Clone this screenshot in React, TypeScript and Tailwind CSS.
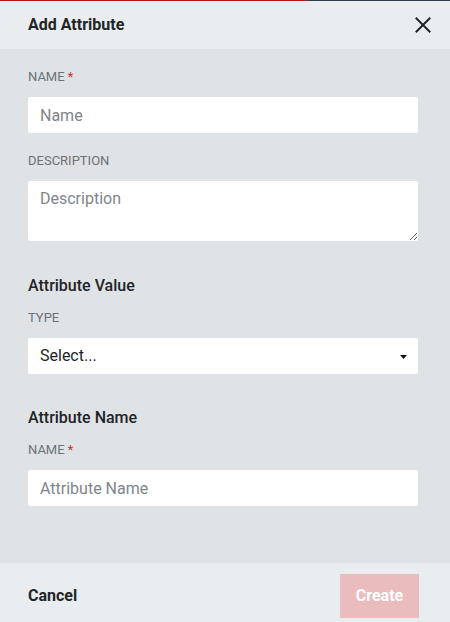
import React from "react";

export default function App() {
  const font = { fontFamily: "Roboto, 'Liberation Sans', sans-serif" };
  return (
    <div className="h-[622px] w-[450px] overflow-hidden flex flex-col bg-[#dfe3e6]" style={font}>
      <div className="flex h-px shrink-0">
        <div className="w-[307px] bg-[#b0191d]" />
        <div className="flex-1 bg-[#2e3d45]" />
      </div>
      <div className="h-[48px] shrink-0 bg-[#e9edf0] flex items-center justify-between pl-[28px] pr-[15px]">
        <div className="text-[16px] font-bold text-[#222426] leading-6">Add Attribute</div>
        <svg width="24" height="24" viewBox="0 0 24 24" fill="none" stroke="#222426" strokeWidth="2" strokeLinecap="square">
          <path d="M5.5 5.5 L18.5 18.5 M18.5 5.5 L5.5 18.5" />
        </svg>
      </div>
      <div className="pl-[28px] pt-[20px] pb-[57px] flex flex-col shrink-0">
        <label className="text-[13px] leading-4 text-[#6c7176] uppercase">
          NAME <span className="text-[#d0312d]">*</span>
        </label>
        <input
          className="mt-[12px] w-[390px] h-[36px] bg-white rounded-[2px] px-3 text-[16px] text-[#222] placeholder:text-[#7f858a] outline-none"
          placeholder="Name"
        />
        <label className="mt-[20px] text-[13px] leading-4 text-[#6c7176]">DESCRIPTION</label>
        <textarea
          className="mt-[12px] w-[390px] h-[60px] bg-white rounded-[2px] px-3 py-[6px] text-[16px] leading-6 text-[#222] placeholder:text-[#7f858a] outline-none resize-y"
          placeholder="Description"
        />
        <div className="mt-[33px] text-[16px] leading-6 font-medium text-[#222426]">Attribute Value</div>
        <label className="mt-[12px] text-[13px] leading-4 text-[#6c7176]">TYPE</label>
        <div className="mt-[12px] w-[390px] h-[36px] bg-white rounded-[2px] pl-3 pr-[8px] flex items-center justify-between">
          <span className="text-[16px] text-[#222426]">Select...</span>
          <svg width="7" height="4" viewBox="0 0 7 4" className="mr-[3px] mt-[1px]">
            <path d="M0 0 H7 L3.5 4 Z" fill="#111" />
          </svg>
        </div>
        <div className="mt-[32px] text-[16px] leading-6 font-medium text-[#222426]">Attribute Name</div>
        <label className="mt-[12px] text-[13px] leading-4 text-[#6c7176]">
          NAME <span className="text-[#d0312d]">*</span>
        </label>
        <input
          className="mt-[12px] w-[390px] h-[36px] bg-white rounded-[2px] px-3 text-[16px] text-[#222] placeholder:text-[#7f858a] outline-none"
          placeholder="Attribute Name"
        />
      </div>
      <div className="shrink-0 bg-[#e9edf0] flex items-center justify-between pl-[28px] pr-[31px] py-[11px]">
        <span className="text-[16px] font-bold text-[#222426]">Cancel</span>
        <button className="w-[79px] h-[44px] bg-[#ebbcbe] text-white text-[16px] font-bold">Create</button>
      </div>
    </div>
  );
}
